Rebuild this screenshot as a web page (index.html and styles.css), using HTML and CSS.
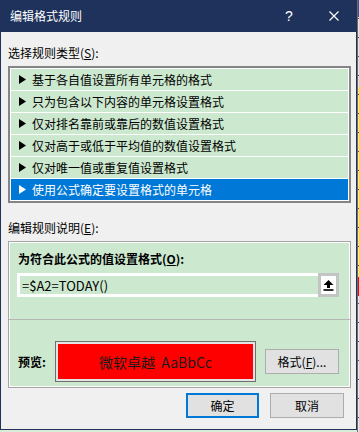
FILE: index.html
```html
<!DOCTYPE html>
<html lang="zh-CN">
<head>
    <meta charset="UTF-8">
    <meta name="viewport" content="width=device-width, initial-scale=1.0">
    <title>编辑格式规则</title>
    <link rel="stylesheet" href="styles.css">
</head>
<body>
    <div class="screen">
        <div class="dialog">
            <div class="titlebar">
                <span class="title">编辑格式规则</span>
                <span class="help">?</span>
                <svg class="close" width="10" height="10" viewBox="0 0 10 10">
                    <path d="M0.5 0.5 L9.5 9.5 M9.5 0.5 L0.5 9.5" stroke="#fff" stroke-width="1.2" fill="none"/>
                </svg>
            </div>

            <div class="content">
                <div class="label">选择规则类型(<u>S</u>):</div>
                <ul class="rule-list">
                    <li><svg class="tri" width="7" height="9" viewBox="0 0 7 9"><polygon points="0,0 7,4.5 0,9"/></svg>基于各自值设置所有单元格的格式</li>
                    <li><svg class="tri" width="7" height="9" viewBox="0 0 7 9"><polygon points="0,0 7,4.5 0,9"/></svg>只为包含以下内容的单元格设置格式</li>
                    <li><svg class="tri" width="7" height="9" viewBox="0 0 7 9"><polygon points="0,0 7,4.5 0,9"/></svg>仅对排名靠前或靠后的数值设置格式</li>
                    <li><svg class="tri" width="7" height="9" viewBox="0 0 7 9"><polygon points="0,0 7,4.5 0,9"/></svg>仅对高于或低于平均值的数值设置格式</li>
                    <li><svg class="tri" width="7" height="9" viewBox="0 0 7 9"><polygon points="0,0 7,4.5 0,9"/></svg>仅对唯一值或重复值设置格式</li>
                    <li class="selected"><svg class="tri" width="7" height="9" viewBox="0 0 7 9"><polygon points="0,0 7,4.5 0,9"/></svg>使用公式确定要设置格式的单元格</li>
                </ul>

                <div class="label label-edit">编辑规则说明(<u>E</u>):</div>
                <div class="panel">
                    <div class="panel-top">
                        <div class="bold-label">为符合此公式的值设置格式(<u>O</u>):</div>
                        <div class="formula">
                            <div class="formula-text">=$A2=TODAY()</div>
                            <div class="ref-btn">
                                <svg width="11" height="11" viewBox="0 0 11 11">
                                    <polygon points="0.5,5 5.5,0 10.5,5 7,5 7,8 4,8 4,5"/>
                                    <rect x="0.5" y="9.2" width="10" height="1.6"/>
                                </svg>
                            </div>
                        </div>
                    </div>
                    <div class="preview-row">
                        <div class="preview-label">预览:</div>
                        <div class="preview-box">
                            <div class="preview-fill">微软卓越&nbsp; AaBbCc</div>
                        </div>
                        <button class="btn format-btn">格式(<u>F</u>)...</button>
                    </div>
                </div>

                <div class="actions">
                    <button class="btn btn-default">确定</button>
                    <button class="btn btn-cancel">取消</button>
                </div>
            </div>
        </div>
        <div class="sheet-col"></div>
    </div>
</body>
</html>
```

FILE: styles.css
```css
body {
    margin: 0;
    font-family: "Noto Sans CJK SC", "Noto Sans", sans-serif;
    font-size: 12px;
    color: #000;
    background-color: #d9ecda;
}

.screen {
    display: flex;
    height: 432px;
}

.dialog {
    width: 357px;
    height: 430px;
    box-sizing: border-box;
    border: 1px solid #1e325c;
    border-top: none;
    background-color: #f0f0f0;
    display: flex;
    flex-direction: column;
}

.titlebar {
    height: 32px;
    background-color: #1e325c;
    color: #fff;
    display: flex;
    align-items: center;
    padding-left: 9px;
    flex-shrink: 0;
}

.title {
    line-height: 16px;
}

.help {
    margin-left: auto;
    width: 10px;
    text-align: center;
    font-family: "Liberation Sans", sans-serif;
    font-size: 14px;
    line-height: 16px;
}

.close {
    margin-left: 35px;
    margin-right: 17px;
}

.content {
    padding: 0 5px 0 7px;
}

.label {
    line-height: 16px;
    margin-top: 13px;
}

.label-edit {
    margin-top: 17px;
}

.rule-list {
    list-style: none;
    margin: 5px 0 0;
    padding: 1px;
    border: 2px solid #858585;
    background-color: #fff;
    display: flex;
    flex-direction: column;
    gap: 1px;
}

.rule-list li {
    height: 21px;
    background-color: #cce8cf;
    display: flex;
    align-items: center;
    padding-left: 8px;
    line-height: 16px;
}

.tri {
    margin-right: 6px;
    fill: #000;
}

.rule-list li.selected {
    background-color: #0078d7;
    color: #fff;
}

.rule-list li.selected .tri {
    fill: #fff;
}

.panel {
    margin-top: 5px;
    border: 1px solid #a5a5a5;
    box-shadow: inset 0 0 0 1px #fff;
    background-color: #cce8cf;
}

.panel-top {
    padding: 9px 11px 22px 8px;
    border-bottom: 1px solid #b6b6b6;
}

.bold-label {
    font-weight: bold;
    line-height: 16px;
    padding-left: 1px;
}

.formula {
    margin-top: 6px;
    height: 24px;
    display: flex;
}

.formula-text {
    flex: 1;
    border: 3px solid #fff;
    border-right: none;
    padding-left: 2px;
    display: flex;
    align-items: center;
    font-size: 13px;
}

.ref-btn {
    width: 15px;
    border: 3px solid #c4c4c4;
    background-color: #fff;
    display: flex;
    align-items: center;
    justify-content: center;
}

.preview-row {
    display: flex;
    align-items: center;
    padding: 21px 11px 5px 9px;
}

.preview-label {
    width: 37px;
    font-weight: bold;
    line-height: 16px;
}

.preview-box {
    width: 201px;
    height: 41px;
    box-sizing: border-box;
    border: 1px solid #6f6f6f;
    padding: 2px;
    background-color: #e4e4e4;
}

.preview-fill {
    height: 100%;
    background-color: #ff0000;
    display: flex;
    align-items: center;
    justify-content: center;
    font-size: 14px;
    color: #1a1a1a;
}

.btn {
    font-family: inherit;
    font-size: 12px;
    color: #000;
    background-color: #e1e1e1;
    border: 1px solid #adadad;
    padding: 0;
    height: 25px;
    box-sizing: border-box;
}

.format-btn {
    margin-left: 9px;
    width: 74px;
}

.actions {
    display: flex;
    justify-content: flex-end;
    gap: 11px;
    margin-top: 5px;
    padding-right: 7px;
}

.btn-default {
    width: 73px;
    border: 2px solid #0078d7;
}

.btn-cancel {
    width: 74px;
}

.sheet-col {
    flex: 1;
    border-left: 1px solid #6c6c6c;
    background:
        repeating-linear-gradient(to bottom, transparent 0 18px, #4a4a4a 18px 19px),
        linear-gradient(to bottom, #2f5597 0 17px, #d7ecd9 17px 87px, #ffff00 87px 277px, #ff0000 277px 296px, #e4f0e4 296px);
}
```
